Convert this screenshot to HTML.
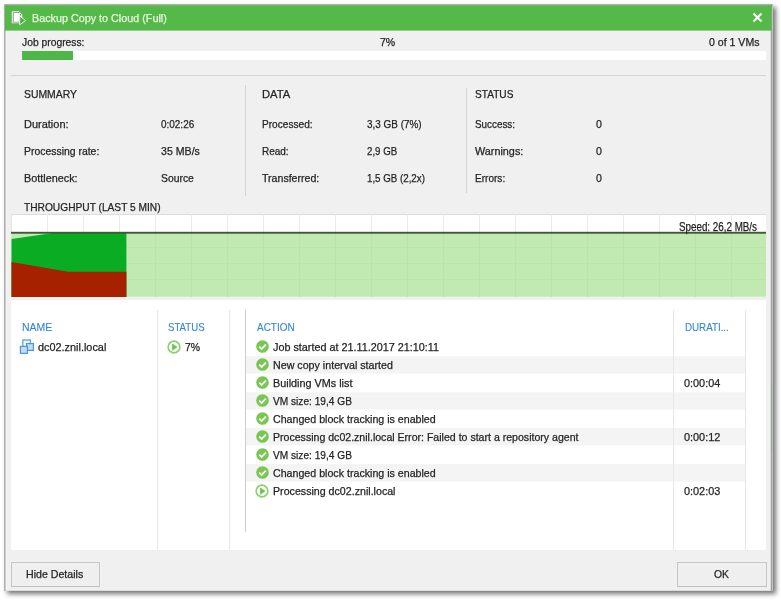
<!DOCTYPE html>
<html><head><meta charset="utf-8">
<style>
html,body{margin:0;padding:0;}
body{width:781px;height:600px;background:#fff;position:relative;overflow:hidden;font-family:"Liberation Sans",sans-serif;font-size:11px;color:#242424;}
.t{-webkit-text-stroke:0.25px currentColor;position:absolute;white-space:nowrap;line-height:14px;height:14px;transform-origin:0 0;}
.a{position:absolute;}
.ck{position:absolute;left:256px;width:13px;height:13px;}
</style></head><body>
<svg class="a" style="left:0;top:0" width="781" height="600" viewBox="0 0 781 600">
<defs><filter id="sh" x="-5%" y="-5%" width="110%" height="110%"><feGaussianBlur stdDeviation="2.700"/></filter></defs>
<rect x="7" y="7" width="769" height="587" fill="#000" opacity=".54" filter="url(#sh)"/>
<rect x="4" y="4" width="769" height="587" fill="#c4c2c4"/>
<rect x="4" y="4" width="768" height="587" fill="#9e9e9e"/><rect x="772" y="384" width="1" height="66" fill="#aac8a2"/>
<rect x="4" y="4" width="766.700" height="587" fill="#b2b0b2"/>
<rect x="5.800" y="5" width="764.900" height="585.700" fill="#f0f0f0"/>
<rect x="5.800" y="30" width="1" height="560.700" fill="#f8f8f8"/>
<rect x="4.930" y="5.100" width="766.700" height="25.500" fill="#54b948"/>
</svg>
<!-- title icon -->
<svg class="a" style="left:8px;top:8px" width="24" height="20" viewBox="8 8 24 20">
<path d="M11.800 11.200H18.800L22.300 14.700V23.300H11.800Z" fill="#f3f1f3"/>
<path d="M13.300 22.200V12.600H18.400" fill="none" stroke="#9a9a9a" stroke-width="1"/><path d="M18.700 12.300V14.800H21.200" fill="none" stroke="#777" stroke-width="1.300"/>
<path d="M12.900 22.100H19.500" fill="none" stroke="#b5b0b5" stroke-width="1.500"/>
<rect x="14" y="13.300" width="5.800" height="8.200" fill="#fff"/>
<path d="M19.700 16L25.600 20.500L19.700 24.800Z" fill="#4db043" stroke="#eef9ec" stroke-width=".9" stroke-linejoin="round"/>
</svg>
<svg class="a" style="left:752px;top:11.600px" width="11" height="11" viewBox="0 0 11 11"><path d="M1.500 1.500l8 8M9.500 1.500l-8 8" stroke="#fff" stroke-width="2" fill="none"/></svg>

<div class="a" style="left:22px;top:51px;width:744px;height:9px;background:#fff"></div>
<div class="a" style="left:22px;top:51px;width:51px;height:9px;background:#4db848"></div>
<div class="a" style="left:11px;top:75px;width:755px;height:1px;background:#d4d4d4"></div>

<div class="a" style="left:245px;top:85px;width:1px;height:111px;background:#d4d4d4"></div>
<div class="a" style="left:466px;top:88px;width:1px;height:105px;background:#d4d4d4"></div>

<!-- chart -->
<svg class="a" style="left:11px;top:214px" width="755" height="83" viewBox="0 0 755 83">
<rect x="0" y="0" width="755" height="83" fill="#dcdcdc"/><rect x="0.700" y="1" width="754.300" height="82" fill="#fff"/>
<rect x="0.500" y="19" width="754.500" height="63.800" fill="#c1eab3"/>
<g stroke="#eaeaea" stroke-width="1">
<path d="M36.500 0v18M72.500 0v18M108.500 0v18M144.500 0v18M180.500 0v18M216.500 0v18M252.500 0v18M288.500 0v18M324.500 0v18M360.500 0v18M396.500 0v18M432.500 0v18M468.500 0v18M504.500 0v18M540.500 0v18M576.500 0v18M612.500 0v18M648.500 0v18M684.500 0v18M720.500 0v18"/>
</g>
<g stroke="#b9e5ab" stroke-width="1">
<path d="M36.500 19v64M72.500 19v64M108.500 19v64M144.500 19v64M180.500 19v64M216.500 19v64M252.500 19v64M288.500 19v64M324.500 19v64M360.500 19v64M396.500 19v64M432.500 19v64M468.500 19v64M504.500 19v64M540.500 19v64M576.500 19v64M612.500 19v64M648.500 19v64M684.500 19v64M720.500 19v64"/>
<path d="M0 33.500h755M0 49.500h755M0 65.500h755"/>
</g>
<polygon points="0.500,25 42,19 115.400,19 115.400,83 0.500,83" fill="#0aac24"/>
<polygon points="0.500,48 57,57.700 115.400,57.700 115.400,83 0.500,83" fill="#a52100"/>
<rect x="0" y="17.800" width="755" height="1.900" fill="#3e5a32"/>
</svg>

<!-- list panel -->
<div class="a" style="left:11px;top:300px;width:755px;height:250px;background:#fff"></div>
<svg class="a" style="left:246px;top:350px" width="499" height="140" viewBox="0 350 499 140"><g fill="#f4f4f4"><rect x="0" y="356.300" width="499" height="17.200"/><rect x="0" y="392.300" width="499" height="17.300"/><rect x="0" y="428" width="499" height="17.400"/><rect x="0" y="464.100" width="499" height="17.400"/></g></svg>
<div class="a" style="left:157px;top:310px;width:1px;height:240px;background:#e7e7e7"></div>
<div class="a" style="left:229px;top:310px;width:1px;height:240px;background:#e7e7e7"></div>
<div class="a" style="left:245px;top:309px;width:1px;height:223px;background:#cdcdcd"></div>
<div class="a" style="left:673px;top:310px;width:1px;height:240px;background:#e7e7e7"></div>
<div class="a" style="left:745px;top:310px;width:1px;height:240px;background:#e7e7e7"></div>

<!-- vm icon -->
<svg class="a" style="left:16px;top:334px" width="24" height="24" viewBox="16 334 24 24">
<rect x="22.800" y="340" width="7.600" height="7" fill="#f2f7fd" stroke="#5aa3dd" stroke-width="1.300"/>
<rect x="26.600" y="343.600" width="6.800" height="6.800" fill="#c3d9f4" stroke="#4a99d8" stroke-width="1.200"/>
<rect x="20.400" y="346.400" width="7" height="7" fill="#c6daf3" stroke="#4a96d6" stroke-width="1.200"/>
</svg>
<svg class="a" style="left:166.600px;top:339.500px;width:14px;height:14px" viewBox="0 0 14 14"><circle cx="7" cy="7" r="5.850" fill="#fff" stroke="#8ad172" stroke-width="1.700"/><path d="M5.500 4L10 7.100L5.500 10.300Z" fill="#6cc448" stroke="#6cc448" stroke-width=".7" stroke-linejoin="round"/></svg>


<svg class="ck" style="top:340.20px" viewBox="0 0 13 13"><circle cx="6.500" cy="6.500" r="6.300" fill="#79c750"/><path d="M3.300 6.700l2.300 2.300l4.200-4.400" fill="none" stroke="#fff" stroke-width="1.800"/></svg>
<svg class="ck" style="top:358.20px" viewBox="0 0 13 13"><circle cx="6.500" cy="6.500" r="6.300" fill="#79c750"/><path d="M3.300 6.700l2.300 2.300l4.200-4.400" fill="none" stroke="#fff" stroke-width="1.800"/></svg>
<svg class="ck" style="top:376.20px" viewBox="0 0 13 13"><circle cx="6.500" cy="6.500" r="6.300" fill="#79c750"/><path d="M3.300 6.700l2.300 2.300l4.200-4.400" fill="none" stroke="#fff" stroke-width="1.800"/></svg>
<svg class="ck" style="top:394.20px" viewBox="0 0 13 13"><circle cx="6.500" cy="6.500" r="6.300" fill="#79c750"/><path d="M3.300 6.700l2.300 2.300l4.200-4.400" fill="none" stroke="#fff" stroke-width="1.800"/></svg>
<svg class="ck" style="top:412.20px" viewBox="0 0 13 13"><circle cx="6.500" cy="6.500" r="6.300" fill="#79c750"/><path d="M3.300 6.700l2.300 2.300l4.200-4.400" fill="none" stroke="#fff" stroke-width="1.800"/></svg>
<svg class="ck" style="top:430.20px" viewBox="0 0 13 13"><circle cx="6.500" cy="6.500" r="6.300" fill="#79c750"/><path d="M3.300 6.700l2.300 2.300l4.200-4.400" fill="none" stroke="#fff" stroke-width="1.800"/></svg>
<svg class="ck" style="top:448.20px" viewBox="0 0 13 13"><circle cx="6.500" cy="6.500" r="6.300" fill="#79c750"/><path d="M3.300 6.700l2.300 2.300l4.200-4.400" fill="none" stroke="#fff" stroke-width="1.800"/></svg>
<svg class="ck" style="top:466.20px" viewBox="0 0 13 13"><circle cx="6.500" cy="6.500" r="6.300" fill="#79c750"/><path d="M3.300 6.700l2.300 2.300l4.200-4.400" fill="none" stroke="#fff" stroke-width="1.800"/></svg>
<svg class="a" style="left:255.300px;top:484px;width:14px;height:14px" viewBox="0 0 14 14"><circle cx="7" cy="7" r="5.850" fill="#fff" stroke="#8ad172" stroke-width="1.700"/><path d="M5.500 4L10 7.100L5.500 10.300Z" fill="#6cc448" stroke="#6cc448" stroke-width=".7" stroke-linejoin="round"/></svg>

<!-- buttons -->
<div class="a" style="left:11px;top:562px;width:87px;height:22.500px;border:1px solid #c6c6c6;border-bottom-color:#c0c0c0;background:#efefef"></div>
<div class="a" style="left:677px;top:562px;width:88px;height:22.500px;border:1px solid #c6c6c6;border-bottom-color:#c0c0c0;background:#efefef"></div>
<span class="t" style="left:31.8px;top:10.7px;transform:scaleX(0.9799);color:#e9f6df">Backup Copy to Cloud (Full)</span>
<span class="t" style="left:22.3px;top:34.8px;transform:scaleX(0.9376);">Job progress:</span>
<span class="t" style="left:379.5px;top:34.8px;transform:scaleX(0.9556);">7%</span>
<span class="t" style="left:709.3px;top:34.8px;transform:scaleX(0.9605);">0 of 1 VMs</span>
<span class="t" style="left:23.8px;top:86.5px;transform:scaleX(0.9441);">SUMMARY</span>
<span class="t" style="left:23.8px;top:116.5px;transform:scaleX(0.9991);">Duration:</span>
<span class="t" style="left:23.8px;top:143.7px;transform:scaleX(0.9474);">Processing rate:</span>
<span class="t" style="left:23.8px;top:170.5px;transform:scaleX(0.9849);">Bottleneck:</span>
<span class="t" style="left:161.2px;top:116.5px;transform:scaleX(0.9046);">0:02:26</span>
<span class="t" style="left:161.2px;top:143.7px;transform:scaleX(0.9638);">35 MB/s</span>
<span class="t" style="left:161.2px;top:170.5px;transform:scaleX(0.9438);">Source</span>
<span class="t" style="left:261.8px;top:86.5px;transform:scaleX(1.0210);">DATA</span>
<span class="t" style="left:261.8px;top:116.5px;transform:scaleX(0.9195);">Processed:</span>
<span class="t" style="left:261.8px;top:143.7px;transform:scaleX(0.9060);">Read:</span>
<span class="t" style="left:261.8px;top:170.5px;transform:scaleX(0.9628);">Transferred:</span>
<span class="t" style="left:367.2px;top:116.5px;transform:scaleX(0.9020);">3,3 GB (7%)</span>
<span class="t" style="left:367.2px;top:143.7px;transform:scaleX(0.8818);">2,9 GB</span>
<span class="t" style="left:367.2px;top:170.5px;transform:scaleX(0.8850);">1,5 GB (2,2x)</span>
<span class="t" style="left:475.1px;top:86.5px;transform:scaleX(0.9194);">STATUS</span>
<span class="t" style="left:475.1px;top:116.5px;transform:scaleX(0.8960);">Success:</span>
<span class="t" style="left:475.1px;top:143.7px;transform:scaleX(0.9835);">Warnings:</span>
<span class="t" style="left:475.1px;top:170.5px;transform:scaleX(0.9152);">Errors:</span>
<span class="t" style="left:596.0px;top:116.5px;transform:scaleX(0.9633);">0</span>
<span class="t" style="left:596.0px;top:143.7px;transform:scaleX(0.9633);">0</span>
<span class="t" style="left:596.0px;top:170.5px;transform:scaleX(0.9633);">0</span>
<span class="t" style="left:23.5px;top:199.9px;transform:scaleX(0.9261);">THROUGHPUT (LAST 5 MIN)</span>
<span class="t" style="left:679.1px;top:220.3px;transform:scaleX(0.8177);color:#222;font-size:12px">Speed: 26,2 MB/s</span>
<span class="t" style="left:22.0px;top:320.2px;transform:scaleX(0.9534);color:#3586d2;-webkit-text-stroke:0.12px #3586d2">NAME</span>
<span class="t" style="left:168.4px;top:320.2px;transform:scaleX(0.8763);color:#3586d2;-webkit-text-stroke:0.12px #3586d2">STATUS</span>
<span class="t" style="left:256.9px;top:320.2px;transform:scaleX(0.9047);color:#3586d2;-webkit-text-stroke:0.12px #3586d2">ACTION</span>
<span class="t" style="left:685.2px;top:320.2px;transform:scaleX(0.8885);color:#3586d2;-webkit-text-stroke:0.12px #3586d2">DURATI...</span>
<span class="t" style="left:38.1px;top:339.6px;transform:scaleX(0.9885);">dc02.znil.local</span>
<span class="t" style="left:184.5px;top:339.6px;transform:scaleX(0.9493);">7%</span>
<span class="t" style="left:273.1px;top:339.6px;transform:scaleX(0.9822);">Job started at 21.11.2017 21:10:11</span>
<span class="t" style="left:273.1px;top:357.6px;transform:scaleX(0.9709);">New copy interval started</span>
<span class="t" style="left:273.1px;top:375.6px;transform:scaleX(0.9839);">Building VMs list</span>
<span class="t" style="left:273.1px;top:393.6px;transform:scaleX(0.9218);">VM size: 19,4 GB</span>
<span class="t" style="left:273.1px;top:411.6px;transform:scaleX(0.9675);">Changed block tracking is enabled</span>
<span class="t" style="left:273.1px;top:429.6px;transform:scaleX(0.9609);">Processing dc02.znil.local Error: Failed to start a repository agent</span>
<span class="t" style="left:273.1px;top:447.6px;transform:scaleX(0.9218);">VM size: 19,4 GB</span>
<span class="t" style="left:273.1px;top:465.6px;transform:scaleX(0.9675);">Changed block tracking is enabled</span>
<span class="t" style="left:273.1px;top:483.6px;transform:scaleX(0.9678);">Processing dc02.znil.local</span>
<span class="t" style="left:684.4px;top:375.6px;transform:scaleX(0.9890);">0:00:04</span>
<span class="t" style="left:684.4px;top:429.6px;transform:scaleX(0.9890);">0:00:12</span>
<span class="t" style="left:684.4px;top:483.6px;transform:scaleX(0.9890);">0:02:03</span>
<span class="t" style="left:25.9px;top:567.2px;transform:scaleX(0.9644);">Hide Details</span>
<span class="t" style="left:714.0px;top:567.2px;transform:scaleX(0.9430);">OK</span>
</body></html>
